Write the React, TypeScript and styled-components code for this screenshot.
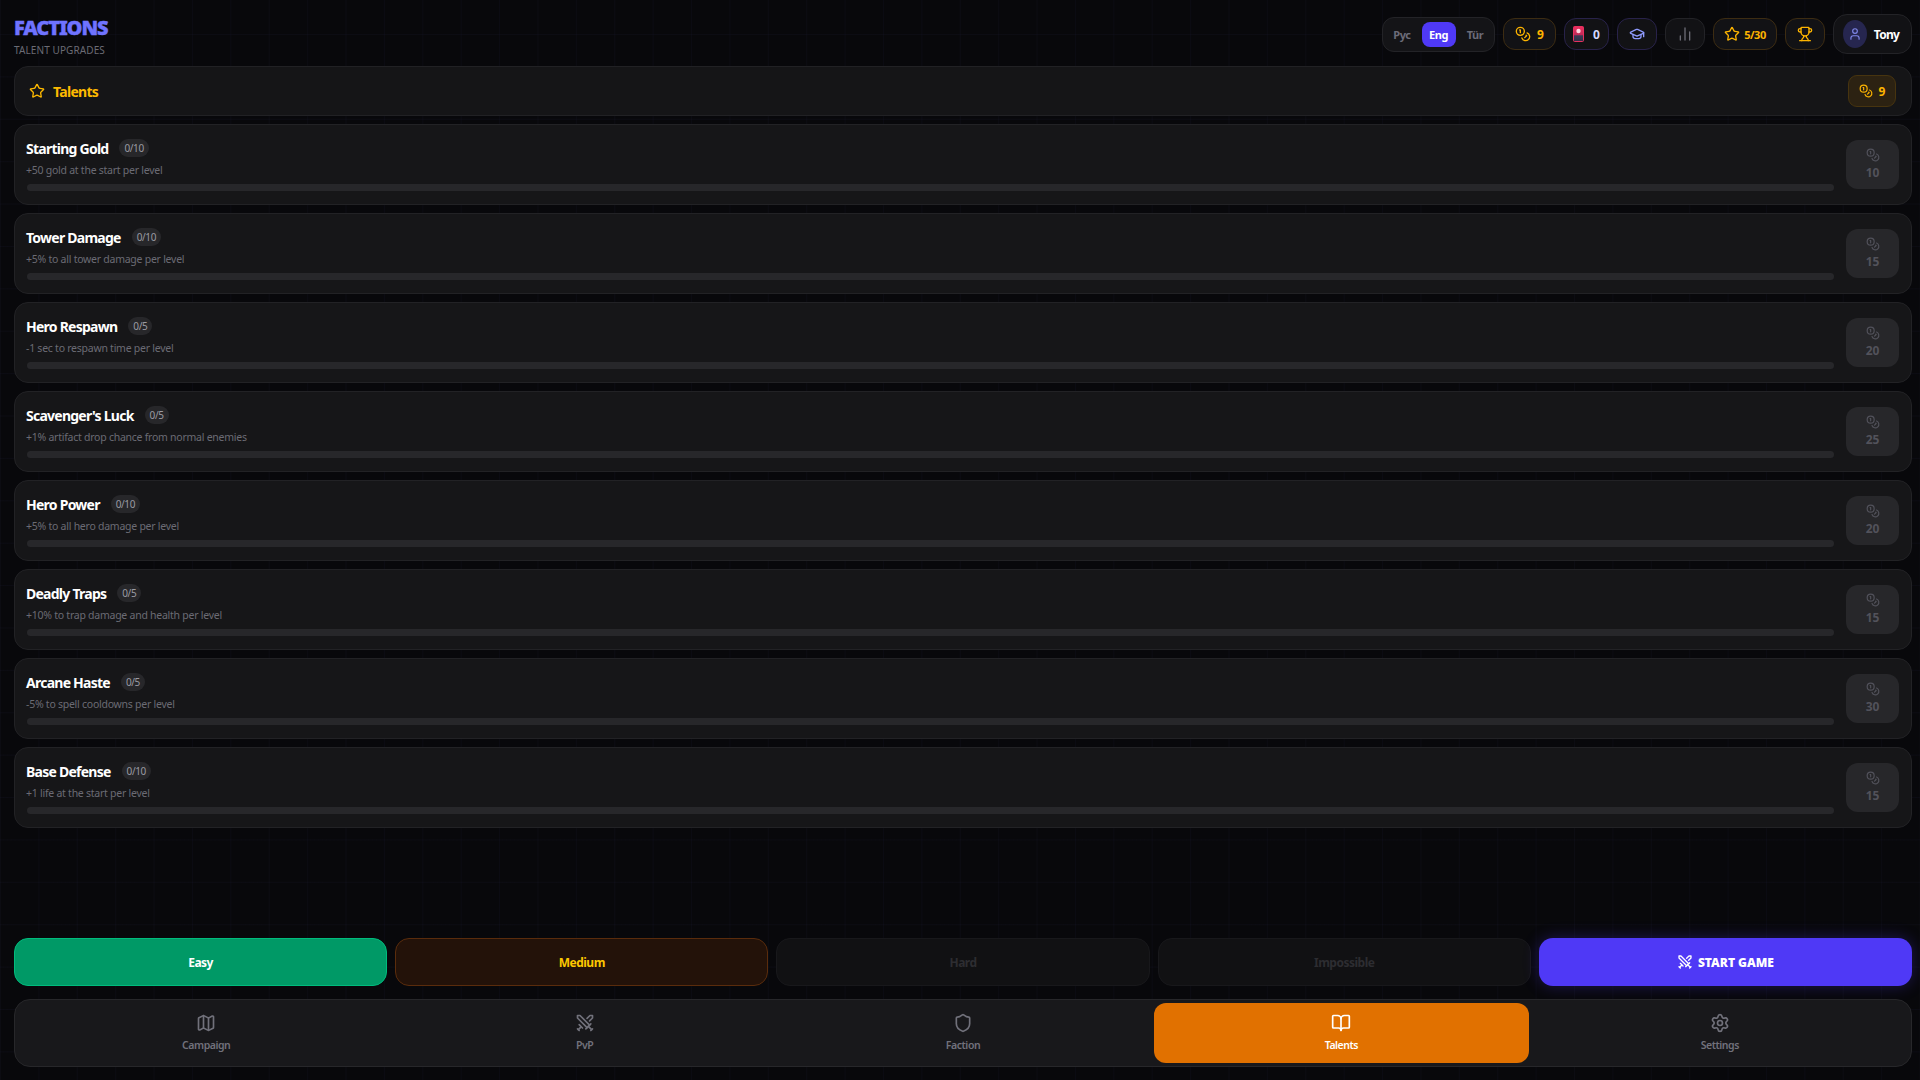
import React from "react";
import styled, { createGlobalStyle } from "styled-components";
import {
  BookOpen,
  ChartNoAxesColumn,
  Coins,
  GraduationCap,
  Map as MapIcon,
  Settings,
  Shield,
  Star,
  Swords,
  Trophy,
  User,
} from "lucide-react";

const GlobalStyle = createGlobalStyle`
  html, body {
    margin: 0;
    padding: 0;
    background: #08080b;
  }
  * {
    box-sizing: border-box;
  }
`;

const talents = [
  { name: "Starting Gold", level: "0/10", desc: "+50 gold at the start per level", cost: 10 },
  { name: "Tower Damage", level: "0/10", desc: "+5% to all tower damage per level", cost: 15 },
  { name: "Hero Respawn", level: "0/5", desc: "-1 sec to respawn time per level", cost: 20 },
  { name: "Scavenger's Luck", level: "0/5", desc: "+1% artifact drop chance from normal enemies", cost: 25 },
  { name: "Hero Power", level: "0/10", desc: "+5% to all hero damage per level", cost: 20 },
  { name: "Deadly Traps", level: "0/5", desc: "+10% to trap damage and health per level", cost: 15 },
  { name: "Arcane Haste", level: "0/5", desc: "-5% to spell cooldowns per level", cost: 30 },
  { name: "Base Defense", level: "0/10", desc: "+1 life at the start per level", cost: 15 },
];

const App: React.FC = () => {
  return (
    <Page>
      <GlobalStyle />
      <Header>
        <Brand>
          <Logo>FACTIONS</Logo>
          <Subtitle>TALENT UPGRADES</Subtitle>
        </Brand>
        <Toolbar>
          <LangGroup>
            <LangButton>Рус</LangButton>
            <LangButton $active>Eng</LangButton>
            <LangButton>Tür</LangButton>
          </LangGroup>
          <Pill $tone="gold" $width={53}>
            <Coins size={16} />
            <span>9</span>
          </Pill>
          <Pill $tone="violet" $width={45}>
            <CardIcon />
            <CardCount>0</CardCount>
          </Pill>
          <Pill $tone="violet" $width={40}>
            <GraduationCap size={16} />
          </Pill>
          <Pill $tone="grey" $width={40}>
            <ChartNoAxesColumn size={16} />
          </Pill>
          <Pill $tone="gold" $width={64}>
            <Star size={16} />
            <SmallCount>5/30</SmallCount>
          </Pill>
          <Pill $tone="gold" $width={40}>
            <Trophy size={16} />
          </Pill>
          <UserChip>
            <Avatar>
              <User size={14} />
            </Avatar>
            <span>Tony</span>
          </UserChip>
        </Toolbar>
      </Header>

      <SectionBar>
        <SectionTitle>
          <Star size={16} />
          <span>Talents</span>
        </SectionTitle>
        <Balance>
          <Coins size={14} />
          <span>9</span>
        </Balance>
      </SectionBar>

      <TalentList>
        {talents.map((t) => (
          <TalentCard key={t.name}>
            <TalentBody>
              <TalentHead>
                <TalentName>{t.name}</TalentName>
                <LevelBadge>{t.level}</LevelBadge>
              </TalentHead>
              <TalentDesc>{t.desc}</TalentDesc>
              <Progress />
            </TalentBody>
            <CostButton>
              <Coins size={14} />
              <span>{t.cost}</span>
            </CostButton>
          </TalentCard>
        ))}
      </TalentList>

      <Footer>
        <DifficultyRow>
          <Difficulty $kind="easy">Easy</Difficulty>
          <Difficulty $kind="medium">Medium</Difficulty>
          <Difficulty $kind="locked">Hard</Difficulty>
          <Difficulty $kind="locked">Impossible</Difficulty>
          <StartButton>
            <Swords size={16} />
            START GAME
          </StartButton>
        </DifficultyRow>
        <BottomNav>
          <NavItem>
            <MapIcon size={20} />
            <span>Campaign</span>
          </NavItem>
          <NavItem>
            <Swords size={20} />
            <span>PvP</span>
          </NavItem>
          <NavItem>
            <Shield size={20} />
            <span>Faction</span>
          </NavItem>
          <NavItem $active>
            <BookOpen size={20} />
            <span>Talents</span>
          </NavItem>
          <NavItem>
            <Settings size={20} />
            <span>Settings</span>
          </NavItem>
        </BottomNav>
      </Footer>
    </Page>
  );
};

export default App;

const CardIcon: React.FC = () => (
  <svg width="11" height="16" viewBox="0 0 11 16">
    <defs>
      <linearGradient id="cardFill" x1="0" y1="0" x2="0" y2="1">
        <stop offset="0" stopColor="#f0305f" />
        <stop offset="0.55" stopColor="#c02a58" />
        <stop offset="0.62" stopColor="#3a3a55" />
        <stop offset="1" stopColor="#2e2e45" />
      </linearGradient>
    </defs>
    <rect x="0.5" y="0.5" width="10" height="15" rx="1" fill="url(#cardFill)" stroke="#e8305f" />
    <circle cx="5.5" cy="5" r="2.2" fill="#ffd6e0" />
  </svg>
);

const Page = styled.div`
  width: 1920px;
  height: 1080px;
  overflow: hidden;
  display: flex;
  flex-direction: column;
  padding: 14px 8px 13px 14px;
  font-family: "Noto Sans", "Open Sans", sans-serif;
  color: #fff;
  background-color: #08080b;
  background-image: linear-gradient(rgba(70, 70, 140, 0.06) 1px, transparent 1px),
    linear-gradient(90deg, rgba(70, 70, 140, 0.06) 1px, transparent 1px);
  background-size: 38.4px 42.4px;
  background-position: 0 34px;
`;

const Header = styled.header`
  display: flex;
  align-items: flex-start;
  justify-content: space-between;
  height: 40px;
  margin-bottom: 12px;
`;

const Brand = styled.div`
  display: flex;
  flex-direction: column;
  padding-top: 1px;
`;

const Logo = styled.h1`
  margin: 0;
  font-size: 20px;
  line-height: 26px;
  font-weight: 900;
  color: #6f73ff;
  letter-spacing: -1.1px;
  -webkit-text-stroke: 0.4px #6f73ff;
`;

const Subtitle = styled.div`
  margin-top: 3px;
  font-size: 10px;
  line-height: 13px;
  color: #6b6b74;
  letter-spacing: 0.1px;
`;

const Toolbar = styled.div`
  display: flex;
  align-items: center;
  gap: 8px;
  height: 40px;
`;

const LangGroup = styled.div`
  display: flex;
  align-items: center;
  justify-content: space-between;
  width: 113px;
  height: 35px;
  padding: 0 2px;
  background: #141417;
  border: 1px solid #232327;
  border-radius: 12px;
`;

const LangButton = styled.button<{ $active?: boolean }>`
  width: 34px;
  height: 25px;
  padding: 0;
  border: none;
  border-radius: 8px;
  font-family: inherit;
  font-size: 11px;
  font-weight: 700;
  letter-spacing: -0.4px;
  background: ${(p) => (p.$active ? "#4f39f6" : "transparent")};
  color: ${(p) => (p.$active ? "#fff" : "#6b6b78")};
`;

const toneBorder = { gold: "#3d2c12", violet: "#28224a", grey: "#232327" };
const toneColor = { gold: "#fdb400", violet: "#8f9bff", grey: "#6b6b74" };

const Pill = styled.div<{ $tone: "gold" | "violet" | "grey"; $width: number }>`
  display: flex;
  align-items: center;
  justify-content: center;
  gap: 6px;
  width: ${(p) => p.$width}px;
  height: 32px;
  background: #121215;
  border: 1px solid ${(p) => toneBorder[p.$tone]};
  border-radius: 12px;
  color: ${(p) => toneColor[p.$tone]};
  font-size: 12px;
  font-weight: 700;
`;

const CardCount = styled.span`
  margin-left: 3px;
  color: #d4d8ff;
`;

const SmallCount = styled.span`
  margin-left: -2px;
  font-size: 11px;
  letter-spacing: -0.5px;
`;

const UserChip = styled.div`
  display: flex;
  align-items: center;
  justify-content: center;
  gap: 7px;
  width: 79px;
  height: 40px;
  padding-right: 3px;
  background: #121215;
  border: 1px solid #232327;
  border-radius: 14px;
  font-size: 12px;
  font-weight: 700;
  letter-spacing: -0.7px;
`;

const Avatar = styled.div`
  display: flex;
  align-items: center;
  justify-content: center;
  width: 24px;
  height: 28px;
  border-radius: 50%;
  background: #26264f;
  color: #7f86e8;
`;

const SectionBar = styled.section`
  display: flex;
  align-items: center;
  justify-content: space-between;
  flex: none;
  height: 50px;
  padding: 0 15px 0 14px;
  background: #151517;
  border: 1px solid #212124;
  border-radius: 14px;
`;

const SectionTitle = styled.h2`
  display: flex;
  align-items: center;
  gap: 8px;
  margin: 0;
  font-size: 14px;
  font-weight: 700;
  letter-spacing: -0.7px;
  color: #fdb900;
`;

const Balance = styled.div`
  display: flex;
  align-items: center;
  justify-content: center;
  gap: 6px;
  width: 48px;
  height: 32px;
  border-radius: 9px;
  background: #2c2212;
  border: 1px solid #47340f;
  color: #fdb400;
  font-size: 12px;
  font-weight: 700;
`;

const TalentList = styled.div`
  display: flex;
  flex-direction: column;
  gap: 8px;
  margin-top: 8px;
`;

const TalentCard = styled.article`
  display: flex;
  align-items: center;
  gap: 12px;
  height: 81px;
  padding: 0 12px;
  background: #161618;
  border: 1px solid #222225;
  border-radius: 14px;
`;

const TalentBody = styled.div`
  flex: 1;
  min-width: 0;
`;

const TalentHead = styled.div`
  display: flex;
  align-items: center;
  gap: 11px;
  height: 22px;
  margin-top: -1px;
`;

const TalentName = styled.h3`
  margin: 0 0 0 -1px;
  font-size: 14px;
  font-weight: 700;
  letter-spacing: -0.75px;
  color: #fff;
`;

const LevelBadge = styled.span`
  padding: 2px 5px;
  border-radius: 9px;
  background: #27272a;
  color: #9b9ba3;
  font-size: 10px;
  line-height: 14px;
  letter-spacing: -0.4px;
`;

const TalentDesc = styled.p`
  margin: 4px 0 0 -1px;
  font-size: 10.5px;
  line-height: 14px;
  letter-spacing: -0.25px;
  color: #6b6b74;
`;

const Progress = styled.div`
  height: 7px;
  margin-top: 7px;
  border-radius: 4px;
  background: #27272a;
`;

const CostButton = styled.div`
  display: flex;
  flex-direction: column;
  align-items: center;
  justify-content: center;
  gap: 2px;
  width: 53px;
  height: 49px;
  flex: none;
  border-radius: 12px;
  background: #27272a;
  color: #52525b;
  font-size: 12px;
  font-weight: 700;
`;

const Footer = styled.div`
  display: flex;
  flex-direction: column;
  gap: 13px;
  margin-top: auto;
`;

const DifficultyRow = styled.div`
  display: grid;
  grid-template-columns: repeat(5, 1fr);
  gap: 8px;
`;

const difficultyStyles = {
  easy: "background: #009966; border-color: #00bc7d; color: #fff;",
  medium: "background: #231209; border-color: #5a2c0c; color: #fdc700;",
  locked: "background: #111113; border-color: #18181b; color: #2d2d31;",
};

const Difficulty = styled.button<{ $kind: "easy" | "medium" | "locked" }>`
  height: 48px;
  padding: 0;
  border: 1px solid;
  border-radius: 14px;
  font-family: inherit;
  font-size: 12px;
  font-weight: 700;
  letter-spacing: -0.5px;
  ${(p) => difficultyStyles[p.$kind]}
`;

const StartButton = styled.button`
  display: flex;
  align-items: center;
  justify-content: center;
  gap: 5px;
  height: 48px;
  padding: 0;
  border: none;
  border-radius: 14px;
  font-family: inherit;
  font-size: 12px;
  font-weight: 900;
  color: #fff;
  background: #4f39f6;
  box-shadow: 0 0 16px rgba(79, 57, 246, 0.3);
`;

const BottomNav = styled.nav`
  display: flex;
  gap: 4px;
  height: 68px;
  padding: 3px 4px;
  background: #18181b;
  border: 1px solid #27272a;
  border-radius: 16px;
`;

const NavItem = styled.div<{ $active?: boolean }>`
  flex: 1;
  display: flex;
  flex-direction: column;
  align-items: center;
  justify-content: center;
  gap: 5px;
  padding-bottom: 1px;
  border-radius: 12px;
  font-size: 10.5px;
  font-weight: 600;
  letter-spacing: -0.45px;
  background: ${(p) => (p.$active ? "#e17100" : "transparent")};
  color: ${(p) => (p.$active ? "#fff" : "#71717b")};
`;
